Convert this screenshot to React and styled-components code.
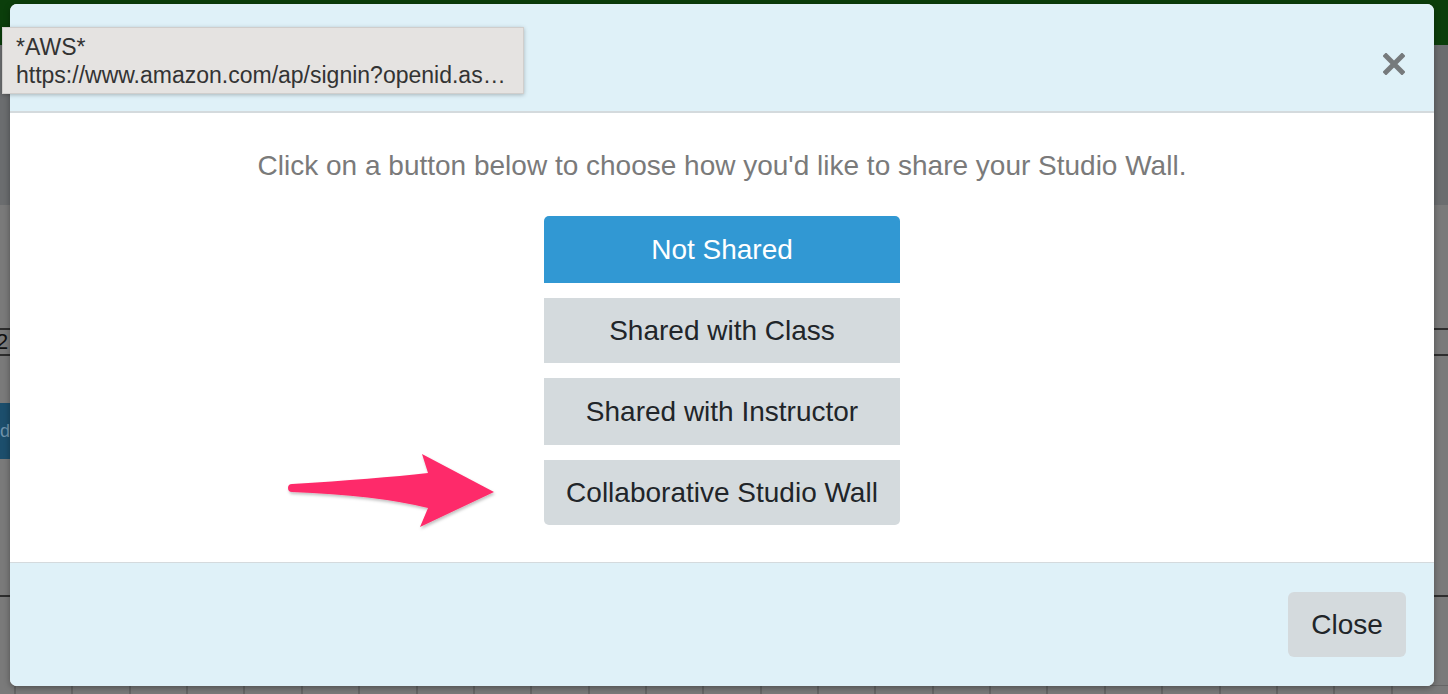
import React from 'react';
import styled, { createGlobalStyle } from 'styled-components';

const GlobalStyle = createGlobalStyle`
  html, body {
    margin: 0;
    padding: 0;
    width: 1448px;
    height: 694px;
    overflow: hidden;
    font-family: 'Liberation Sans', Arial, sans-serif;
  }
`;

const options = [
  { label: 'Not Shared', active: true },
  { label: 'Shared with Class' },
  { label: 'Shared with Instructor' },
  { label: 'Collaborative Studio Wall' },
];

const ShareModal = () => {
  return (
    <>
      <GlobalStyle />
      <Page>
        <TopBar />
        <SubBar />
        <Workspace>
          <Spacer h={123} />
          <Rule />
          <TableRow>
            <Cell>2</Cell>
          </TableRow>
          <Rule />
          <Spacer h={47} />
          <BlueRow>
            <BlueTab>d</BlueTab>
          </BlueRow>
          <Spacer h={136} />
          <Rule />
          <Spacer h={88} />
          <GridRow>
            {Array.from({ length: 25 }).map((_, i) => (
              <GridCell key={i} />
            ))}
          </GridRow>
        </Workspace>

        <Modal>
          <Header>
            <CloseX aria-label="close">
              <svg width="22" height="22" viewBox="0 0 22 22">
                <path d="M3 3 L19 19 M19 3 L3 19" stroke="#767a7c" strokeWidth="5" strokeLinecap="square" />
              </svg>
            </CloseX>
          </Header>
          <Body>
            <Intro>Click on a button below to choose how you'd like to share your Studio Wall.</Intro>
            <Options>
              {options.map((o, i) => (
                <OptionButton
                  key={o.label}
                  $active={o.active}
                  $first={i === 0}
                  $last={i === options.length - 1}
                >
                  {o.label}
                </OptionButton>
              ))}
            </Options>
            <Arrow width="220" height="84" viewBox="0 0 220 84">
              <defs>
                <filter id="sh" x="-10%" y="-10%" width="120%" height="130%">
                  <feDropShadow dx="1" dy="2" stdDeviation="1.5" floodColor="#000" floodOpacity="0.25" />
                </filter>
              </defs>
              <path
                filter="url(#sh)"
                d="M7 35 Q 90 30 143 24 L 137 5 L 209 43 L 135 78 L 143 59 Q 90 46 7 43 A 4 4 0 0 1 7 35 Z"
                fill="#fe2c6a"
              />
            </Arrow>
          </Body>
          <Footer>
            <CloseButton>Close</CloseButton>
          </Footer>
        </Modal>

        <Tooltip>
          <TipLine>*AWS*</TipLine>
          <TipLine>https://www.amazon.com/ap/signin?openid.as…</TipLine>
        </Tooltip>
      </Page>
    </>
  );
};

const Page = styled.div`
  position: relative;
  width: 1448px;
  height: 694px;
  display: flex;
  flex-direction: column;
  background: #7a7a7a;
  overflow: hidden;
`;

const TopBar = styled.div`
  height: 45px;
  background: #0b3e0b;
`;

const SubBar = styled.div`
  height: 160px;
  background: #6b6d6f;
`;

const Workspace = styled.div`
  display: flex;
  flex-direction: column;
  flex: 1;
`;

const Spacer = styled.div`
  height: ${(p) => p.h}px;
`;

const Rule = styled.div`
  height: 2px;
  background: #2e2e2e;
`;

const TableRow = styled.div`
  height: 24px;
  display: flex;
  align-items: center;
`;

const Cell = styled.div`
  font-size: 22px;
  color: #111;
  margin-left: -4px;
`;

const BlueRow = styled.div`
  height: 56px;
  display: flex;
`;

const BlueTab = styled.div`
  width: 60px;
  background: #1c4e6c;
  color: #6f93ab;
  font-size: 18px;
  display: flex;
  align-items: center;
  justify-content: flex-end;
  padding-right: 52px;
  margin-left: -50px;
`;

const GridRow = styled.div`
  display: flex;
  flex: 1;
  border-top: 1px solid #666;
  margin-left: 14px;
`;

const GridCell = styled.div`
  width: 59px;
  border-left: 2px solid #666;
`;

const Modal = styled.div`
  position: absolute;
  left: 10px;
  top: 4px;
  width: 1424px;
  height: 682px;
  border-radius: 7px;
  overflow: hidden;
  display: flex;
  flex-direction: column;
  background: #fff;
  box-shadow: 0 2px 6px rgba(0, 0, 0, 0.35);
`;

const Header = styled.div`
  height: 109px;
  background: #dff1f8;
  border-bottom: 2px solid #d4dadd;
  display: flex;
  align-items: center;
  justify-content: flex-end;
  padding-right: 29px;
  padding-top: 12px;
  box-sizing: border-box;
  flex-shrink: 0;
`;

const CloseX = styled.div`
  width: 22px;
  height: 22px;
  display: flex;
`;

const Body = styled.div`
  position: relative;
  height: 449px;
  display: flex;
  flex-direction: column;
  align-items: center;
  padding-top: 36px;
  box-sizing: border-box;
  background: #fff;
  flex-shrink: 0;
`;

const Intro = styled.div`
  font-size: 28px;
  color: #7a7a7a;
  line-height: 34px;
  margin-bottom: 33px;
`;

const Options = styled.div`
  display: flex;
  flex-direction: column;
  gap: 15px;
  width: 356px;
`;

const OptionButton = styled.button`
  height: 67px;
  border: none;
  font-family: 'Liberation Sans', Arial, sans-serif;
  font-size: 28px;
  color: ${(p) => (p.$active ? '#ffffff' : '#212529')};
  background: ${(p) => (p.$active ? '#3198d3' : '#d4dadd')};
  border-radius: ${(p) => (p.$first ? '5px 5px 0 0' : p.$last ? '0 0 5px 5px' : '0')};
  padding: 0;
  cursor: pointer;

  &:nth-child(even) {
    height: 65px;
  }
`;

const Arrow = styled.svg`
  position: absolute;
  left: 275px;
  top: 336px;
`;

const Footer = styled.div`
  flex: 1;
  background: #dff1f8;
  border-top: 1px solid #d4dadd;
  display: flex;
  justify-content: flex-end;
  align-items: flex-start;
  padding: 29px 28px 0 0;
`;

const CloseButton = styled.button`
  width: 118px;
  height: 65px;
  border: none;
  border-radius: 6px;
  background: #d4dadd;
  color: #212529;
  font-family: 'Liberation Sans', Arial, sans-serif;
  font-size: 28px;
  cursor: pointer;
`;

const Tooltip = styled.div`
  position: absolute;
  left: 2px;
  top: 27px;
  width: 522px;
  height: 67px;
  box-sizing: border-box;
  padding: 5px 13px;
  background: #e5e3e1;
  border: 1px solid #d0cecc;
  box-shadow: 0 1px 4px rgba(0, 0, 0, 0.25);
  display: flex;
  flex-direction: column;
  justify-content: center;
`;

const TipLine = styled.div`
  font-size: 23px;
  line-height: 28px;
  color: #333;
  white-space: nowrap;
`;

export default ShareModal;
